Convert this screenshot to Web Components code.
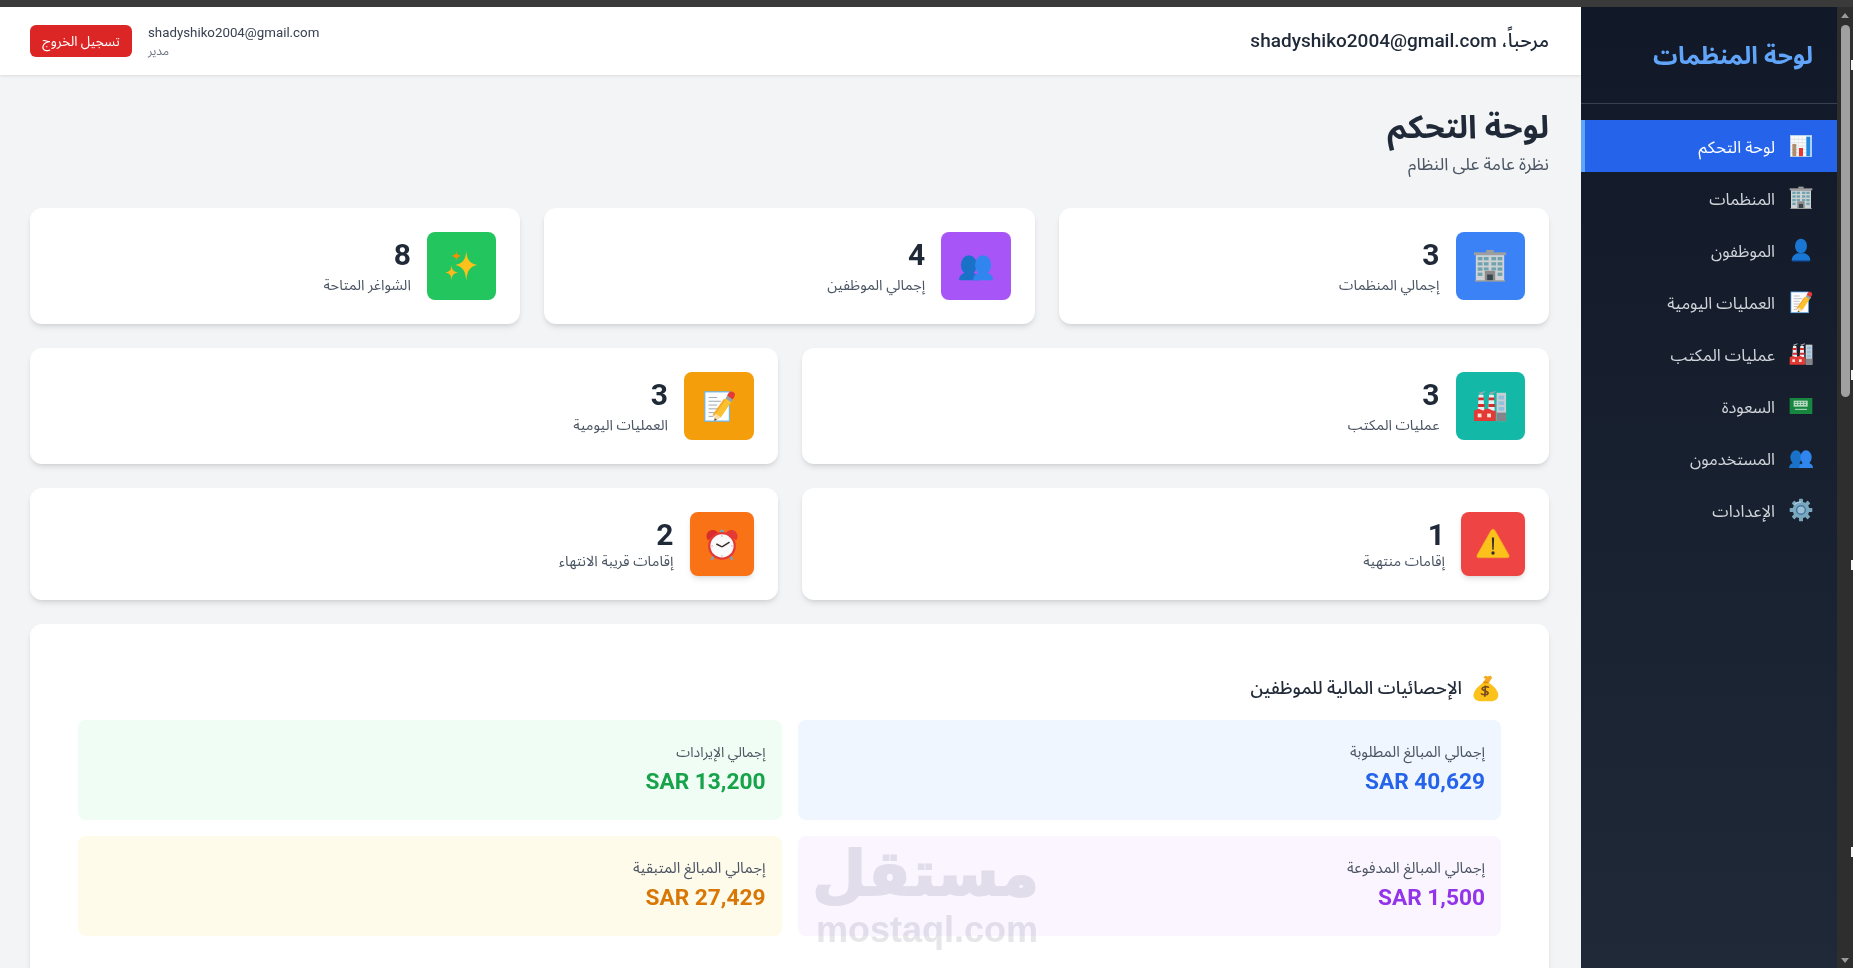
<!DOCTYPE html>
<html lang="ar" dir="rtl">
<head>
<meta charset="utf-8">
<title>لوحة التحكم</title>
<style>
html,body{margin:0;padding:0;height:968px;overflow:hidden;background:#2e2e2e}
body{font-family:Roboto,"Noto Sans Arabic","DejaVu Sans",sans-serif;color:#1f2937}
</style>
</head>
<body>
<app-shell>
  <app-sidebar slot="side" title-text="لوحة المنظمات">
    <nav-item icon="chart" active>لوحة التحكم</nav-item>
    <nav-item icon="building">المنظمات</nav-item>
    <nav-item icon="person">الموظفون</nav-item>
    <nav-item icon="memo">العمليات اليومية</nav-item>
    <nav-item icon="factory">عمليات المكتب</nav-item>
    <nav-item icon="flag">السعودة</nav-item>
    <nav-item icon="people">المستخدمون</nav-item>
    <nav-item icon="gear">الإعدادات</nav-item>
  </app-sidebar>
  <top-bar slot="top" greeting="مرحباً، shadyshiko2004@gmail.com" email="shadyshiko2004@gmail.com" role="مدير" action="تسجيل الخروج"></top-bar>
  <page-head title-text="لوحة التحكم" sub="نظرة عامة على النظام"></page-head>
  <stat-row cols="3">
    <stat-card value="3" label="إجمالي المنظمات" icon="building" color="#3b82f6"></stat-card>
    <stat-card value="4" label="إجمالي الموظفين" icon="people" color="#a855f7"></stat-card>
    <stat-card value="8" label="الشواغر المتاحة" icon="sparkles" color="#22c55e"></stat-card>
  </stat-row>
  <stat-row cols="2">
    <stat-card value="3" label="عمليات المكتب" icon="factory" color="#14b8a6"></stat-card>
    <stat-card value="3" label="العمليات اليومية" icon="memo" color="#f59e0b"></stat-card>
  </stat-row>
  <stat-row cols="2">
    <stat-card compact value="1" label="إقامات منتهية" icon="warning" color="#ef4444"></stat-card>
    <stat-card compact value="2" label="إقامات قريبة الانتهاء" icon="clock" color="#f97316"></stat-card>
  </stat-row>
  <fin-panel title-text="الإحصائيات المالية للموظفين">
    <fin-box label="إجمالي المبالغ المطلوبة" amount="SAR 40,629" bg="#eff6ff" fg="#2563eb"></fin-box>
    <fin-box small label="إجمالي الإيرادات" amount="SAR 13,200" bg="#f0fdf4" fg="#16a34a"></fin-box>
    <fin-box label="إجمالي المبالغ المدفوعة" amount="SAR 1,500" bg="#faf5ff" fg="#9333ea"></fin-box>
    <fin-box label="إجمالي المبالغ المتبقية" amount="SAR 27,429" bg="#fefbea" fg="#d97706"></fin-box>
  </fin-panel>
  <mostaql-mark slot="overlay"></mostaql-mark>
</app-shell>
<script>
const ICONS = {
chart:`<rect x="2" y="2" width="32" height="32" fill="#fafafa"/><path d="M2 8h32M2 13h32M2 18h32M2 23h32M2 28h32" stroke="#cfd8dc" stroke-width="1"/><path d="M8 2v32M14 2v32M20 2v32M26 2v32" stroke="#e3e7ea" stroke-width="1"/><rect x="5" y="15" width="6" height="19" fill="#b08d6c"/><rect x="15" y="21" width="6" height="13" fill="#e53935"/><rect x="26" y="4" width="6" height="30" fill="#1e88e5"/><rect x="2" y="2" width="32" height="32" fill="none" stroke="#b9d4ea" stroke-width="1"/>`,
building:`<rect x="14" y="1" width="8" height="3" fill="#9e9e9e"/><rect x="1" y="3.500" width="34" height="3" fill="#9e9e9e"/><rect x="3" y="6.500" width="30" height="27.500" fill="#cfd2d4"/><g fill="#6fa3ad"><rect x="5" y="8.500" width="5" height="3.500"/><rect x="11.500" y="8.500" width="5" height="3.500"/><rect x="19.500" y="8.500" width="5" height="3.500"/><rect x="26" y="8.500" width="5" height="3.500"/><rect x="5" y="14" width="5" height="3.500"/><rect x="11.500" y="14" width="5" height="3.500"/><rect x="19.500" y="14" width="5" height="3.500"/><rect x="26" y="14" width="5" height="3.500"/><rect x="5" y="19.500" width="5" height="3.500"/><rect x="11.500" y="19.500" width="5" height="3"/><rect x="19.500" y="19.500" width="5" height="3"/><rect x="26" y="19.500" width="5" height="3.500"/><rect x="5" y="25" width="5" height="3.500"/><rect x="26" y="25" width="5" height="3.500"/></g><rect x="12.500" y="23" width="11" height="11" fill="#8a8a8a"/><rect x="15" y="27" width="6" height="7" fill="#37474f"/><rect x="2" y="33" width="32" height="1.500" fill="#9e9e9e"/>`,
person:`<ellipse cx="18" cy="12" rx="9" ry="11" fill="#1976d2"/><path d="M4 34c0-7 5-10 9-11h10c4 1 9 4 9 11z" fill="#1976d2"/><path d="M5 34h26v1.400H5z" fill="#0d47a1"/>`,
memo:`<rect x="3" y="3" width="26" height="31" fill="#fdfdfd" stroke="#64b5f6" stroke-width="1.200"/><path d="M7 9h9M7 13h13M7 17h9M7 21h10M7 25h7M7 29h5" stroke="#9aa5ab" stroke-width="1"/><path d="M27 7l6 4-13 19-7 4 1-8z" fill="#fbc02d"/><path d="M24 11l-12 17" stroke="#f9a825" stroke-width="2"/><path d="M14 26l-1 8 7-4z" fill="#f7dcae"/><path d="M13.500 31l-.500 3 2.800-1.500z" fill="#37474f"/><path d="M27 7l6 4-2 3-6-4z" fill="#90a4ae"/><path d="M28 4.500c1.500-2 3-2.500 5-1.200s2.600 3 1.200 5L32.500 11l-6-4z" fill="#e53935"/>`,
factory:`<path d="M6 4l7-2v1l-5 3zM17 4l7-2v1l-5 3z" fill="#9ea7ad"/><path d="M6 6h5l1 17H5z" fill="#eceff1"/><path d="M5.500 9h6v3h-6zM5.300 16h7v3h-7z" fill="#d32f2f"/><path d="M17 6h5l1 17h-7z" fill="#eceff1"/><path d="M16.500 9h6v3h-6zM16.300 16h7v3h-7z" fill="#d32f2f"/><rect x="25" y="4" width="10" height="30" fill="#c9ced2"/><g fill="#8fc1de"><rect x="27" y="7" width="6" height="4"/><rect x="27" y="13" width="6" height="4"/><rect x="27" y="19" width="6" height="4"/></g><rect x="25" y="25" width="10" height="9" fill="#82858a"/><path d="M1 23l5-2 5 2 2-2 4 0 4 2h3v11H1z" fill="#e53935"/><rect x="5" y="26" width="4" height="4" fill="#f5e6d3"/><rect x="15" y="26" width="4" height="4" fill="#f5e6d3"/>`,
flag:`<rect x="1" y="6" width="34" height="24" fill="#17873f"/><rect x="7" y="10" width="21" height="9" fill="#b7d8c2"/><path d="M9 12.500h17M9 15.800h17" stroke="#17873f" stroke-width="1.200" stroke-dasharray="3 1.500"/><path d="M9 23h18" stroke="#d8ecdf" stroke-width="1.300"/>`,
people:`<ellipse cx="10.500" cy="17" rx="8.500" ry="10.500" fill="#1a72c8"/><path d="M0 33c0-5 4-7 7-8h7c3 1 7 3 7 8z" fill="#1a72c8"/><ellipse cx="25.500" cy="17" rx="8.500" ry="10.500" fill="#3085ee"/><path d="M15 33c0-5 4-7 7-8h7c3 1 7 3 7 8z" fill="#3085ee"/>`,
gear:`<g fill="#7aa7bd"><circle cx="18" cy="18" r="12.500"/><rect x="15" y="1" width="6" height="7" rx="1"/><rect x="15" y="28" width="6" height="7" rx="1"/><rect x="1" y="15" width="7" height="6" rx="1"/><rect x="28" y="15" width="7" height="6" rx="1"/><rect x="15" y="1" width="6" height="7" rx="1" transform="rotate(45 18 18)"/><rect x="15" y="28" width="6" height="7" rx="1" transform="rotate(45 18 18)"/><rect x="1" y="15" width="7" height="6" rx="1" transform="rotate(45 18 18)"/><rect x="28" y="15" width="7" height="6" rx="1" transform="rotate(45 18 18)"/></g><circle cx="18" cy="18" r="6.500" fill="#9cc0d2" stroke="#3f78a5" stroke-width="2.200"/><path d="M8 10a12 12 0 0 1 10-4" stroke="#a9c9d9" stroke-width="2" fill="none"/>`,
sparkles:`<path d="M22.500 2c.8 9 3 13 11.500 15-8.500 2-10.700 7-11.500 17-.8-10-3-15-11.500-17 8.500-2 10.700-6 11.500-15z" fill="#fcc21b"/><path d="M12 2c.4 3.400 1.200 4.300 5 5.300-3.800 1-4.600 1.900-5 5.200-.4-3.300-1.200-4.200-5-5.200 3.800-1 4.600-1.900 5-5.300z" fill="#fb8c00"/><path d="M7 17c.5 5 1.400 6.500 6.500 8-5.100 1.500-6 3-6.500 8-.5-5-1.400-6.500-6.500-8 5.100-1.500 6-3 6.500-8z" fill="#fdb81e"/>`,
warning:`<path d="M18 2.500c1 0 1.700.600 2.300 1.600L34.700 29.500c1 1.800.100 3-1.500 3H2.800c-1.600 0-2.500-1.200-1.500-3L15.700 4.100C16.300 3.100 17 2.500 18 2.500z" fill="#fcc21b" stroke="#f5a623" stroke-width=".8"/><path d="M16.800 11h2.400l-.500 13h-1.400z" fill="#2f2f2f"/><circle cx="18" cy="27.500" r="1.800" fill="#2f2f2f"/>`,
clock:`<path d="M3 14c-3-4-1-9 3-10.500 3.500-1.200 7 .5 8 3z" fill="#d92c2c"/><path d="M33 14c3-4 1-9-3-10.500-3.500-1.200-7 .5-8 3z" fill="#e53935"/><path d="M16 3h4v3h-4z" fill="#78a5bd"/><path d="M9 31l-2 4M27 31l2 4" stroke="#78a5bd" stroke-width="2.500"/><circle cx="18" cy="20" r="13.500" fill="#fafafa" stroke="#e53935" stroke-width="2.400"/><path d="M18 21l-6-3M18 21l8-5" stroke="#3b2b2b" stroke-width="1.500" fill="none"/><g fill="#9e9e9e"><circle cx="18" cy="9.500" r=".7"/><circle cx="18" cy="30.500" r=".7"/><circle cx="7.500" cy="20" r=".7"/><circle cx="28.500" cy="20" r=".7"/></g>`,
money:`<path d="M15 10c-6 4-13 11-13 17 0 5 4 8 10 8h13c6 0 10-3 10-8 0-7-7-13-13-17z" fill="#fcc21b"/><path d="M15 10l3-5-3-2 3-2 3 1 4-1 2 3-2 2-2 4z" fill="#f6a821"/><path d="M15 10h7" stroke="#e08a00" stroke-width="2.200"/><path d="M22.500 17c-1-2-8-2-9 1s9 3 8 6.500c-1 2.500-8 2.500-9.500 0M18 14l-1 15" stroke="#7a4a1c" stroke-width="2.200" fill="none"/>`
};
function define(name, css, render){
  customElements.define(name, class extends HTMLElement{
    connectedCallback(){
      if(this.shadowRoot) return;
      const r=this.attachShadow({mode:"open"});
      r.innerHTML=`<style>${css}</style>`+render(this);
    }
  });
}
define("emoji-icon",`:host{display:inline-block;width:var(--s,24px);height:var(--s,24px);flex:none;line-height:0}svg{width:100%;height:100%;display:block}`,
  el=>`<svg viewBox="0 0 36 36" aria-hidden="true">${ICONS[el.getAttribute("name")]||""}</svg>`);
define("app-shell",`
  :host{display:grid;grid-template-columns:16px 256px 1fr;grid-template-rows:7px 961px;width:1853px;height:968px;background:#2e2e2e;position:relative;overflow:hidden}
  .strip{grid-column:1/-1;background:#3a3a3a}
  .bar{background:#2e2e2e;display:flex;flex-direction:column;align-items:center;position:relative}
  .up,.down{width:0;height:0;border-left:4.500px solid transparent;border-right:4.500px solid transparent}
  .up{border-bottom:5px solid #9a9a9a;margin-top:6px}
  .thumb{width:9px;height:372px;margin-top:7px;border-radius:5px;background:#a0a0a0}
  .down{border-top:5px solid #9a9a9a;margin-top:auto;margin-bottom:5px}
  .tick{position:absolute;right:0;width:2px;height:10px;background:#f5f5f5}
  .main{min-width:0;background:#f3f4f6;display:flex;flex-direction:column;overflow:hidden}
  .content{flex:none;padding:32px 32px 0 30px;display:flex;flex-direction:column;gap:24px}
`,el=>`<div class="strip"></div>
  <div class="bar"><span class="up"></span><span class="thumb"></span><span class="down"></span>
    <span class="tick" style="top:53px"></span><span class="tick" style="top:363px"></span><span class="tick" style="top:553px"></span><span class="tick" style="top:840px"></span></div>
  <slot name="side"></slot>
  <div class="main"><slot name="top"></slot><div class="content"><slot></slot></div></div>
  <slot name="overlay"></slot>`);
define("app-sidebar",`
  :host{display:block;background:linear-gradient(to bottom,#111827,#1f2937);height:961px}
  .logo{box-sizing:border-box;border-bottom:1px solid #374151;height:97px;padding:1px 24px 0;display:flex;align-items:center;font-size:24.400px;font-weight:700;color:#60a5fa}
  nav{margin-top:16px;display:flex;flex-direction:column}
`,el=>`<div class="logo">${el.getAttribute("title-text")}</div><nav><slot></slot></nav>`);
define("nav-item",`
  :host{display:flex;align-items:center;gap:14px;height:52px;box-sizing:border-box;padding:0 24px;color:#d1d5db;font-size:16.500px;border-left:4px solid transparent}
  :host([active]){background:#2563eb;color:#fff;border-left-color:#60a5fa}
  span{padding-top:2px}
`,el=>`<emoji-icon name="${el.getAttribute("icon")}"></emoji-icon><span><slot></slot></span>`);
define("top-bar",`
  :host{display:flex;flex:none;align-items:center;justify-content:space-between;height:68px;box-sizing:border-box;padding:0 32px 0 30px;background:#fff;box-shadow:0 1px 3px rgba(0,0,0,.1);position:relative}
  .hi{font-size:19px;color:#1f2937;font-weight:500}
  .user{display:flex;align-items:center;gap:16px}
  .who{display:flex;flex-direction:column;text-align:left;font-size:13.300px;line-height:20px;color:#374151}
  .who small{font-size:12px;line-height:16px;color:#6b7280}
  .out{height:32px;width:102px;display:flex;align-items:center;justify-content:center;background:#dc2626;color:#fff;font-size:13.500px;border-radius:6px}
`,el=>`<div class="hi">${el.getAttribute("greeting")}</div>
  <div class="user"><div class="who"><span>${el.getAttribute("email")}</span><small>${el.getAttribute("role")}</small></div><div class="out">${el.getAttribute("action")}</div></div>`);
define("page-head",`
  :host{display:block;margin-bottom:9px}
  h1{margin:0 0 8px;font-size:32px;line-height:36px;font-weight:700;color:#1f2937;padding-top:2px;height:34px}
  p{margin:0;font-size:17.300px;line-height:26px;height:24px;color:#4b5563}
`,el=>`<h1>${el.getAttribute("title-text")}</h1><p>${el.getAttribute("sub")}</p>`);
define("stat-row",`:host{display:grid;gap:24px}:host([cols="3"]){grid-template-columns:repeat(3,1fr)}:host([cols="2"]){grid-template-columns:repeat(2,1fr)}`,el=>`<slot></slot>`);
define("stat-card",`
  :host{display:flex;align-items:center;gap:16px;box-sizing:border-box;padding:24px;background:#fff;border-radius:12px;box-shadow:0 4px 6px -1px rgba(0,0,0,.1),0 2px 4px -2px rgba(0,0,0,.1)}
  .box{width:69.500px;height:68px;border-radius:8px;display:flex;align-items:center;justify-content:center;flex:none;--s:34px}
  :host([compact]) .box{width:64px;height:64px;box-shadow:0 4px 6px -1px rgba(0,0,0,.1),0 2px 4px -2px rgba(0,0,0,.1)}
  b{display:block;font-size:30px;line-height:38px;height:36px;font-weight:700;color:#1f2937}
  span{display:block;font-size:14.500px;line-height:20px;color:#4b5563;margin-top:4px}
  :host([compact]) span{margin-top:0}
`,el=>`<div class="box" style="background:${el.getAttribute("color")}"><emoji-icon name="${el.getAttribute("icon")}"></emoji-icon></div>
  <div><b>${el.getAttribute("value")}</b><span>${el.getAttribute("label")}</span></div>`);
define("fin-panel",`
  :host{display:block;background:#fff;border-radius:12px;padding:48px;box-shadow:0 4px 6px -1px rgba(0,0,0,.1),0 2px 4px -2px rgba(0,0,0,.1)}
  h2{margin:0 0 16px;height:32px;padding-right:2px;display:flex;align-items:center;gap:10px;font-size:18px;font-weight:500;color:#1f2937;--s:27px}
  .grid{display:grid;grid-template-columns:1fr 1fr;gap:16px}
`,el=>`<h2><emoji-icon name="money"></emoji-icon>${el.getAttribute("title-text")}</h2><div class="grid"><slot></slot></div>`);
define("fin-box",`
  :host{display:block;height:100px;box-sizing:border-box;padding:17px 16px;border-radius:8px}
  span{display:block;font-size:15px;line-height:20px;color:#4b5563;margin-top:5px}
  :host([small]) span{font-size:14px}
  b{display:block;font-size:22.700px;line-height:32px;font-weight:700;margin-top:4px}
`,el=>{el.style.background=el.getAttribute("bg");return `<span>${el.getAttribute("label")}</span><b style="color:${el.getAttribute("fg")}">${el.getAttribute("amount")}</b>`});
define("mostaql-mark",`
  :host{position:absolute;left:817px;top:840px;width:222px;color:#e6e6ea;text-align:center;pointer-events:none;mix-blend-mode:multiply}
  .ar{display:block;height:68px;font:700 62px/68px "DejaVu Sans",sans-serif;-webkit-text-stroke:2px #e6e6ea}
  .en{display:block;direction:ltr;height:36px;margin-left:-2px;font:700 36px/36px "Liberation Sans",sans-serif;margin-top:4px}
`,el=>`<span class="ar">مستقل</span><span class="en">mostaql.com</span>`);
</script>
</body>
</html>
